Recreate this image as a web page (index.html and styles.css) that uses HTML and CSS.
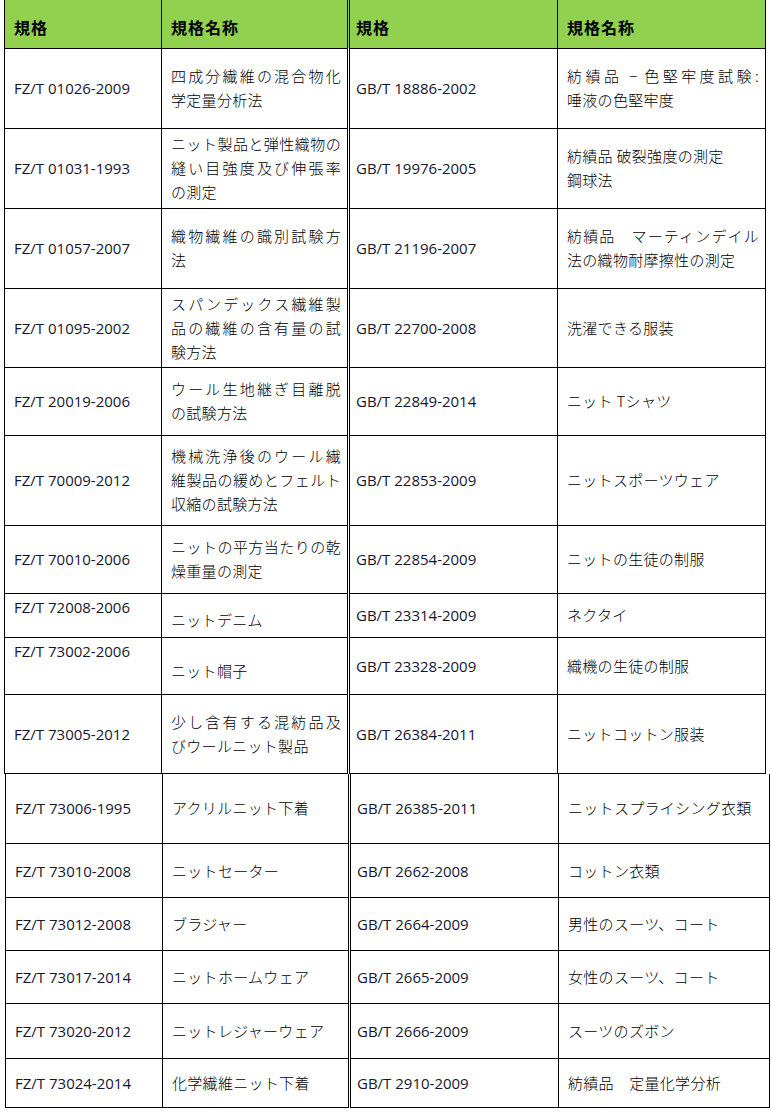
FILE: index.html
```html
<!DOCTYPE html>
<html lang="ja">
<head>
<meta charset="utf-8">
<title>規格一覧</title>
<link rel="stylesheet" href="styles.css">
</head>
<body>
<table class="grid upper">
  <colgroup><col class="c1"><col class="c2"><col class="c3"><col class="c4"></colgroup>
  <thead>
    <tr class="h48">
      <th>規格</th><th class="split">規格名称</th><th>規格</th><th>規格名称</th>
    </tr>
  </thead>
  <tbody>
    <tr class="h80">
      <td class="code">FZ/T 01026-2009</td>
      <td class="name split"><span class="jl">四成分繊維の混合物化</span>学定量分析法</td>
      <td class="code">GB/T 18886-2002</td>
      <td class="name"><span class="jl">紡績品 − 色堅牢度試験:</span>唾液の色堅牢度</td>
    </tr>
    <tr class="h80">
      <td class="code">FZ/T 01031-1993</td>
      <td class="name split"><span class="jl">ニット製品と弾性織物の</span><span class="jl">縫い目強度及び伸張率</span>の測定</td>
      <td class="code">GB/T 19976-2005</td>
      <td class="name">紡績品 破裂強度の測定<br>鋼球法</td>
    </tr>
    <tr class="h80">
      <td class="code">FZ/T 01057-2007</td>
      <td class="name split"><span class="jl">織物繊維の識別試験方</span>法</td>
      <td class="code">GB/T 21196-2007</td>
      <td class="name"><span class="jl">紡績品　マーティンデイル</span>法の織物耐摩擦性の測定</td>
    </tr>
    <tr class="h79">
      <td class="code">FZ/T 01095-2002</td>
      <td class="name split"><span class="jl">スパンデックス繊維製</span><span class="jl">品の繊維の含有量の試</span>験方法</td>
      <td class="code">GB/T 22700-2008</td>
      <td class="name">洗濯できる服装</td>
    </tr>
    <tr class="h68">
      <td class="code">FZ/T 20019-2006</td>
      <td class="name split"><span class="jl">ウール生地継ぎ目離脱</span>の試験方法</td>
      <td class="code">GB/T 22849-2014</td>
      <td class="name">ニット Tシャツ</td>
    </tr>
    <tr class="h90">
      <td class="code">FZ/T 70009-2012</td>
      <td class="name split"><span class="jl">機械洗浄後のウール繊</span><span class="jl">維製品の緩めとフェルト</span>収縮の試験方法</td>
      <td class="code">GB/T 22853-2009</td>
      <td class="name">ニットスポーツウェア</td>
    </tr>
    <tr class="h68">
      <td class="code">FZ/T 70010-2006</td>
      <td class="name split"><span class="jl">ニットの平方当たりの乾</span>燥重量の測定</td>
      <td class="code">GB/T 22854-2009</td>
      <td class="name">ニットの生徒の制服</td>
    </tr>
    <tr class="h44">
      <td class="code top">FZ/T 72008-2006</td>
      <td class="name split low">ニットデニム</td>
      <td class="code">GB/T 23314-2009</td>
      <td class="name">ネクタイ</td>
    </tr>
    <tr class="h57">
      <td class="code top">FZ/T 73002-2006</td>
      <td class="name split low">ニット帽子</td>
      <td class="code">GB/T 23328-2009</td>
      <td class="name">織機の生徒の制服</td>
    </tr>
    <tr class="h79">
      <td class="code">FZ/T 73005-2012</td>
      <td class="name split"><span class="jl">少し含有する混紡品及</span>びウールニット製品</td>
      <td class="code">GB/T 26384-2011</td>
      <td class="name">ニットコットン服装</td>
    </tr>
  </tbody>
</table>
<table class="grid lower">
  <colgroup><col class="c1"><col class="c2"><col class="c3"><col class="c4"></colgroup>
  <tbody>
    <tr class="h70">
      <td class="code">FZ/T 73006-1995</td>
      <td class="name split">アクリルニット下着</td>
      <td class="code">GB/T 26385-2011</td>
      <td class="name">ニットスプライシング衣類</td>
    </tr>
    <tr class="h54">
      <td class="code">FZ/T 73010-2008</td>
      <td class="name split">ニットセーター</td>
      <td class="code">GB/T 2662-2008</td>
      <td class="name">コットン衣類</td>
    </tr>
    <tr class="h53">
      <td class="code">FZ/T 73012-2008</td>
      <td class="name split">ブラジャー</td>
      <td class="code">GB/T 2664-2009</td>
      <td class="name">男性のスーツ、コート</td>
    </tr>
    <tr class="h53">
      <td class="code">FZ/T 73017-2014</td>
      <td class="name split">ニットホームウェア</td>
      <td class="code">GB/T 2665-2009</td>
      <td class="name">女性のスーツ、コート</td>
    </tr>
    <tr class="h55">
      <td class="code">FZ/T 73020-2012</td>
      <td class="name split">ニットレジャーウェア</td>
      <td class="code">GB/T 2666-2009</td>
      <td class="name">スーツのズボン</td>
    </tr>
    <tr class="h49">
      <td class="code">FZ/T 73024-2014</td>
      <td class="name split">化学繊維ニット下着</td>
      <td class="code">GB/T 2910-2009</td>
      <td class="name">紡績品　定量化学分析</td>
    </tr>
  </tbody>
</table>
</body>
</html>
```
FILE: styles.css
```css
html, body {
  margin: 0;
  padding: 0;
  background: #ffffff;
}

.grid {
  border-collapse: collapse;
  table-layout: fixed;
  font-family: "Open Sans", "Noto Sans CJK JP", sans-serif;
  color: #111122;
}

.upper {
  margin-left: 4px;
  width: 761px;
}

.lower {
  margin-left: 5px;
  width: 764px;
}

.upper .c1 { width: 157px; }
.upper .c2 { width: 187px; }
.upper .c3 { width: 209px; }
.upper .c4 { width: 208px; }

.lower .c1 { width: 157px; }
.lower .c2 { width: 187px; }
.lower .c3 { width: 209px; }
.lower .c4 { width: 211px; }

.grid th,
.grid td {
  border: 1px solid #000000;
  padding: 0 6px 0 9px;
  vertical-align: middle;
  text-align: left;
}

.grid th:nth-child(3),
.grid td:nth-child(3) {
  padding-left: 6px;
}

.upper thead th {
  border-top: none;
  background: #92d050;
  font-family: "Noto Sans CJK JP", sans-serif;
  font-weight: 700;
  font-size: 16px;
  letter-spacing: 1px;
  color: #000000;
  padding-top: 6px;
}

.lower tr:first-child td {
  border-top: none;
}

.grid .split {
  border-right: 3px double #000000;
}

.code {
  font-family: "Open Sans", sans-serif;
  font-size: 15px;
  color: #161630;
  white-space: nowrap;
}

.name {
  font-family: "Noto Sans CJK JP", sans-serif;
  font-weight: 300;
  font-size: 15px;
  line-height: 24px;
  letter-spacing: 0.3px;
  color: #000000;
  white-space: nowrap;
}

.jl {
  display: block;
  white-space: normal;
  text-align: justify;
  text-align-last: justify;
  text-justify: inter-character;
}

.grid td.top {
  vertical-align: top;
  padding-top: 3px;
}

.grid td.low {
  padding-top: 10px;
}

.h44 { height: 44px; }
.h48 { height: 48px; }
.h49 { height: 49px; }
.h53 { height: 53px; }
.h54 { height: 54px; }
.h55 { height: 55px; }
.h57 { height: 57px; }
.h68 { height: 68px; }
.h70 { height: 70px; }
.h79 { height: 79px; }
.h80 { height: 80px; }
.h90 { height: 90px; }
```
